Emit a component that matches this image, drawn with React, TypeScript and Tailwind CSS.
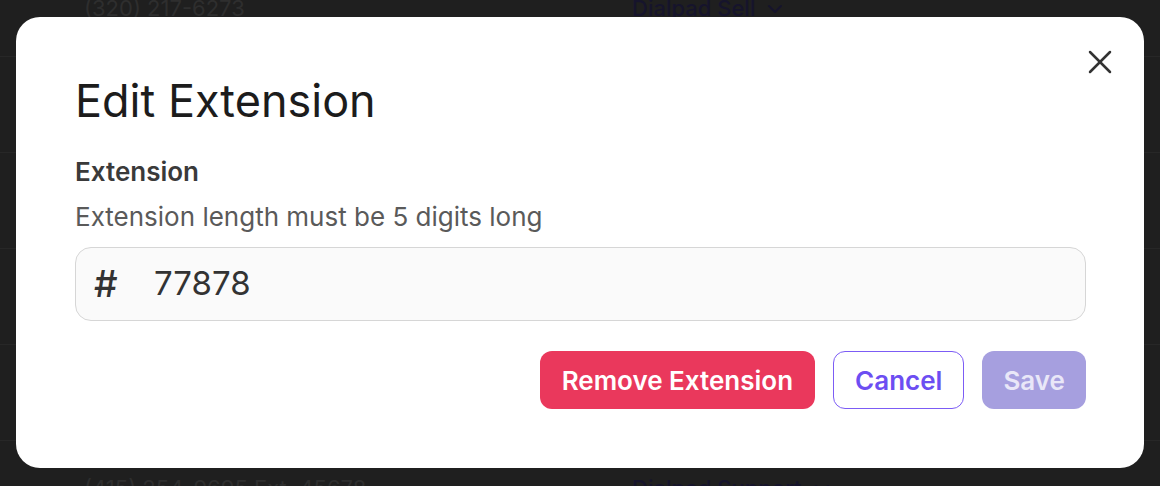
import { X } from "lucide-react";

const rows = [
  { phone: "(320) 217-6273", team: "Dialpad Sell" },
  { phone: "(415) 254-9695", team: "Dialpad Sell" },
  { phone: "(415) 254-9695", team: "Dialpad Sell" },
  { phone: "(415) 254-9695", team: "Dialpad Sell" },
  { phone: "(415) 254-9695", team: "Dialpad Sell" },
  { phone: "(415) 254-9695 Ext. 45678", team: "Dialpad Support" },
];

function Chevron() {
  return (
    <svg width="16" height="10" viewBox="0 0 16 10" fill="none" className="ml-3">
      <path d="M2 2l6 6 6-6" stroke="currentColor" strokeWidth="2" strokeLinecap="round" strokeLinejoin="round" />
    </svg>
  );
}

export default function App() {
  return (
    <div
      className="relative h-[486px] w-[1160px] overflow-hidden bg-[#1f1f1f]"
      style={{ fontFamily: "Inter, 'Noto Sans', sans-serif" }}
    >
      {/* Table behind the overlay */}
      <div className="-mt-[39px] flex flex-col">
        {rows.map((r, i) => (
          <div key={i} className="flex h-[96px] items-center border-b border-[#272727] text-[22px]">
            <div className="w-[632px] pl-[84px] text-[#2e2e2e]">{r.phone}</div>
            <div className="flex items-center font-medium text-[#16142c]">
              {r.team}
              <Chevron />
            </div>
          </div>
        ))}
      </div>

      {/* Modal */}
      <div className="absolute left-[16px] top-[17px] h-[451px] w-[1128px] rounded-[24px] bg-white pl-[59px] pr-[58px] pt-[57px]">
        <button className="absolute right-[24px] top-[25px] text-[#333]">
          <X size={40} strokeWidth={1.5} />
        </button>
        <h2 className="text-[45px] leading-[54px] font-normal text-[#1c1c1c]">Edit Extension</h2>
        <div className="mt-[28px] text-[26px] leading-[32px] font-semibold text-[#3a3a3a]">Extension</div>
        <div className="mt-[13px] text-[26px] leading-[32px] text-[#5a5a5a]">Extension length must be 5 digits long</div>
        <div className="mt-[14px] flex h-[74px] items-center rounded-[16px] border border-[#d6d6d6] bg-[#fafafa] pl-[18px] text-[33px] text-[#333]">
          <span className="w-[60px] text-[37px] font-medium">#</span>
          <span>77878</span>
        </div>
        <div className="mt-[30px] flex justify-end gap-[18px]">
          <button className="h-[58px] rounded-[12px] bg-[#ea385c] px-[22px] text-[26px] font-semibold text-white">
            Remove Extension
          </button>
          <button className="h-[58px] rounded-[12px] border border-[#7c5cf5] bg-white px-[21px] text-[26px] font-semibold text-[#6c4ef2]">
            Cancel
          </button>
          <button className="h-[58px] rounded-[12px] bg-[#a69fdf] px-[21px] text-[26px] font-semibold text-[#e9e7f8]">
            Save
          </button>
        </div>
      </div>
    </div>
  );
}
